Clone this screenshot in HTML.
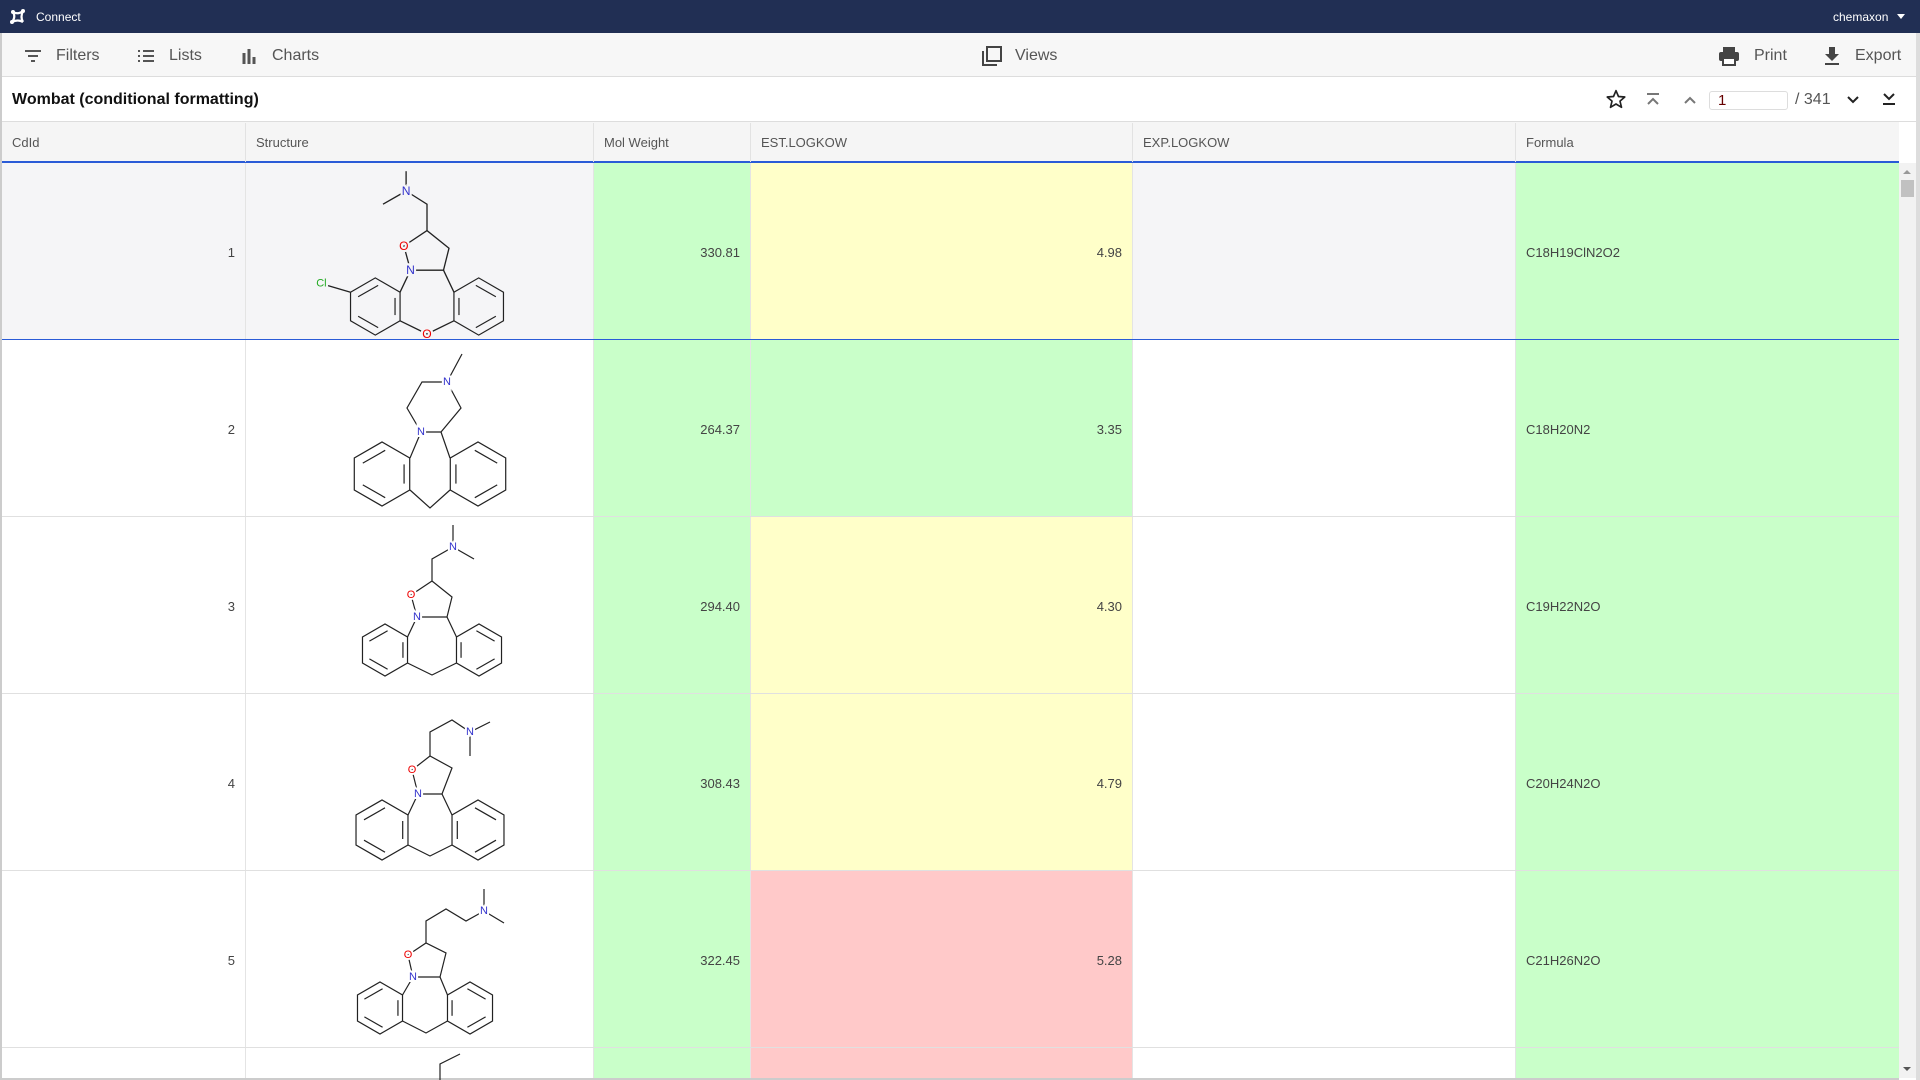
<!DOCTYPE html>
<html><head><meta charset="utf-8">
<style>
*{box-sizing:border-box;margin:0;padding:0}
body{width:1920px;height:1080px;overflow:hidden;background:#fff;font-family:"Liberation Sans",Arial,sans-serif;position:relative;color:#444}
.top{position:absolute;left:0;top:0;width:1920px;height:33px;background:#212f54;color:#fff;font-size:12px}
.tb{position:absolute;left:0;top:33px;width:1920px;height:44px;background:#f7f7f7;border-bottom:1px solid #ddd;font-size:16px;color:#555}
.tb .it{position:absolute;top:1px;height:44px;display:flex;align-items:center;gap:10px}
.title{position:absolute;left:0;top:77px;width:1920px;height:45px;border-bottom:1px solid #ddd;background:#fff}
.title b{position:absolute;left:12px;top:14px;font-size:16px;color:#111}
.hdr{position:absolute;left:2px;top:122px;width:1897px;height:41px;background:#f5f5f5;border-bottom:2px solid #2a5bd7;font-size:13px;color:#555}
.hdr div{position:absolute;top:1px;height:39px;line-height:39px;padding-left:10px;border-right:1px solid #e2e2e2}
.row{position:absolute;left:2px;width:1897px;border-bottom:1px solid #e0e0e0;font-size:13px;color:#444}
.c{position:absolute;top:0;bottom:0;border-right:1px solid #e4e4e4}
.n{display:flex;align-items:center;justify-content:flex-end;padding-right:10px;padding-top:2px}
.f{display:flex;align-items:center;padding-left:10px;padding-top:2px}
.g{background:#c9ffc9}.y{background:#ffffc9}.r{background:#ffc9c9}
svg.m{position:absolute;left:0;top:0}
.m line,.m polyline,.m polygon{stroke:#222;stroke-width:1.2;fill:none}
.m text{font-size:11px;text-anchor:middle;dominant-baseline:central;paint-order:stroke;stroke-width:4px}
</style></head><body>
<svg width="0" height="0" style="position:absolute">
 <symbol id="bz" overflow="visible">
  <g stroke="#222" fill="none" stroke-width="1.2">
  <polygon vector-effect="non-scaling-stroke" points="0.866,-0.5 0.866,0.5 0,1 -0.866,0.5 -0.866,-0.5 0,-1"/>
  <line vector-effect="non-scaling-stroke" x1="0.69" y1="-0.3" x2="0.69" y2="0.3"/>
  <line vector-effect="non-scaling-stroke" x1="0.1" y1="0.74" x2="-0.6" y2="0.34"/>
  <line vector-effect="non-scaling-stroke" x1="-0.6" y1="-0.34" x2="0.1" y2="-0.74"/>
  </g>
 </symbol>
</svg>

<div class="top">
 <svg style="position:absolute;left:9px;top:8px" width="18" height="18" viewBox="0 0 18 18"><path d="M4 4 Q9 7 14 3 M4 4 Q7 9 3 14 M14 3 Q11 9 14 14 M3 14 Q9 11 14 14" stroke="#fff" stroke-width="2.2" fill="none"/><circle cx="4" cy="4" r="2" fill="#fff"/><circle cx="14" cy="3" r="2" fill="#fff"/><circle cx="3" cy="14" r="2" fill="#fff"/></svg>
 <span style="position:absolute;left:36px;top:10px">Connect</span>
 <span style="position:absolute;left:1833px;top:10px">chemaxon</span>
 <span style="position:absolute;left:1897px;top:14px;border-left:4px solid transparent;border-right:4px solid transparent;border-top:5px solid #fff"></span>
</div>

<div class="tb">
 <div class="it" style="left:24px"><svg width="18" height="14"><path d="M1 2h16M4 7h10M7 12h4" stroke="#555" stroke-width="2"/></svg><span style="margin-left:4px">Filters</span></div>
 <div class="it" style="left:137px"><svg width="18" height="14"><path d="M1 2h2M6 2h11M1 7h2M6 7h11M1 12h2M6 12h11" stroke="#555" stroke-width="2"/></svg><span style="margin-left:4px">Lists</span></div>
 <div class="it" style="left:242px"><svg width="14" height="16"><path d="M2 5v11M7 1v15M12 9v7" stroke="#555" stroke-width="3"/></svg><span style="margin-left:6px">Charts</span></div>
 <div class="it" style="left:981px"><svg width="22" height="22"><path d="M2 6v14h14" stroke="#444" stroke-width="2" fill="none"/><rect x="6" y="2" width="14" height="14" stroke="#444" stroke-width="2" fill="none"/></svg><span style="margin-left:2px">Views</span></div>
 <div class="it" style="left:1718px"><svg width="22" height="20"><rect x="5" y="1" width="12" height="5" fill="#444"/><rect x="1" y="6" width="20" height="9" rx="2" fill="#444"/><rect x="5" y="12" width="12" height="7" fill="#fff" stroke="#444" stroke-width="2"/></svg><span style="margin-left:4px">Print</span></div>
 <div class="it" style="left:1823px"><svg width="18" height="20"><path d="M6 1h6v7h4l-7 7-7-7h4z" fill="#444"/><rect x="2" y="17" width="14" height="2" fill="#444"/></svg><span style="margin-left:4px">Export</span></div>
</div>

<div class="title"><b>Wombat (conditional formatting)</b>
 <svg style="position:absolute;left:1606px;top:12px" width="20" height="20" viewBox="0 0 24 24"><path d="M12 2l3 7 7.5.6-5.7 5 1.8 7.4L12 18l-6.6 4 1.8-7.4-5.7-5L9 9z" stroke="#222" stroke-width="2" fill="none" stroke-linejoin="round"/></svg>
 <svg style="position:absolute;left:1646px;top:16px" width="14" height="14"><path d="M1 1h12M2 11l5-5 5 5" stroke="#777" stroke-width="2" fill="none"/></svg>
 <svg style="position:absolute;left:1683px;top:18px" width="14" height="10"><path d="M2 8l5-5 5 5" stroke="#777" stroke-width="2" fill="none"/></svg>
 <div style="position:absolute;left:1709px;top:14px;width:79px;height:19px;border:1px solid #ddd;border-radius:3px;font-size:15px;color:#600;padding-left:8px;line-height:17px">1</div>
 <span style="position:absolute;left:1795px;top:14px;font-size:16px;color:#555">/ 341</span>
 <svg style="position:absolute;left:1846px;top:18px" width="14" height="10"><path d="M2 2l5 5 5-5" stroke="#222" stroke-width="2" fill="none"/></svg>
 <svg style="position:absolute;left:1882px;top:15px" width="14" height="14"><path d="M2 2l5 5 5-5M1 12h12" stroke="#222" stroke-width="2" fill="none"/></svg>
</div>

<div class="hdr">
 <div style="left:0;width:244px">CdId</div>
 <div style="left:244px;width:348px">Structure</div>
 <div style="left:592px;width:157px">Mol Weight</div>
 <div style="left:749px;width:382px">EST.LOGKOW</div>
 <div style="left:1131px;width:383px">EXP.LOGKOW</div>
 <div style="left:1514px;width:383px;border-right:none">Formula</div>
</div>

<div class="row" style="top:163px;height:177px;background:#f5f5f7;border-bottom:1px solid #2a5bd7">
 <div class="c n" style="left:0;width:244px">1</div>
 <div class="c" style="left:244px;width:348px">
  <svg class="m" width="348" height="176"><g transform="translate(181,94) scale(1.1) translate(-174,-88)">
   <use href="#bz" transform="translate(127,133) scale(26)"/>
   <use href="#bz" transform="translate(221,133) scale(-26,26)"/>
   <line x1="149.5" y1="120" x2="159" y2="100"/><line x1="198.5" y1="120" x2="189" y2="100"/>
   <polyline points="149.5,146 174,158 198.5,146"/>
   <polyline points="159,100 153,78 174,64 194,80 189,100 159,100"/>
   <polyline points="174,64 174,40 155,28"/><line x1="155" y1="28" x2="155" y2="10"/><line x1="155" y1="28" x2="134" y2="40"/>
   <line x1="104.5" y1="120" x2="84" y2="114"/>
   <text x="174" y="158" fill="#e00" stroke="#f5f5f7">O</text>
   <text x="153" y="78" fill="#e00" stroke="#f5f5f7">O</text>
   <text x="159" y="100" fill="#33c" stroke="#f5f5f7">N</text>
   <text x="155" y="28" fill="#33c" stroke="#f5f5f7">N</text>
   <text x="78" y="112" fill="#2a2" stroke="#f5f5f7" style="font-size:10px">Cl</text>
  </g></svg>
 </div>
 <div class="c n g" style="left:592px;width:157px">330.81</div>
 <div class="c n y" style="left:749px;width:382px">4.98</div>
 <div class="c" style="left:1131px;width:383px"></div>
 <div class="c f g" style="left:1514px;width:383px;border-right:none">C18H19ClN2O2</div>
</div>

<div class="row" style="top:340px;height:177px">
 <div class="c n" style="left:0;width:244px">2</div>
 <div class="c" style="left:244px;width:348px">
  <svg class="m" width="348" height="176"><g transform="translate(10,0)">
   <use href="#bz" transform="translate(126,134) scale(32)"/>
   <use href="#bz" transform="translate(222,134) scale(-32,32)"/>
   <line x1="154" y1="118" x2="165" y2="92"/><line x1="194" y1="118" x2="185" y2="92"/>
   <polyline points="154,150 174,168 194,150"/>
   <polyline points="165,92 151,68 166,42 191,42 205,68 185,92 165,92"/>
   <line x1="191" y1="42" x2="206" y2="14"/>
   <text x="165" y="92" fill="#33c" stroke="#fff">N</text>
   <text x="191" y="42" fill="#33c" stroke="#fff">N</text>
  </g></svg>
 </div>
 <div class="c n g" style="left:592px;width:157px">264.37</div>
 <div class="c n g" style="left:749px;width:382px">3.35</div>
 <div class="c" style="left:1131px;width:383px"></div>
 <div class="c f g" style="left:1514px;width:383px;border-right:none">C18H20N2</div>
</div>

<div class="row" style="top:517px;height:177px">
 <div class="c n" style="left:0;width:244px">3</div>
 <div class="c" style="left:244px;width:348px">
  <svg class="m" width="348" height="176"><g transform="translate(12,0)">
   <use href="#bz" transform="translate(127,133) scale(26)"/>
   <use href="#bz" transform="translate(221,133) scale(-26,26)"/>
   <line x1="149.5" y1="120" x2="159" y2="100"/><line x1="198.5" y1="120" x2="189" y2="100"/>
   <polyline points="149.5,146 174,158 198.5,146"/>
   <polyline points="159,100 153,78 174,64 194,80 189,100 159,100"/>
   <polyline points="174,64 174,42 195,30"/><line x1="195" y1="30" x2="195" y2="8"/><line x1="195" y1="30" x2="216" y2="42"/>
   <text x="153" y="78" fill="#e00" stroke="#fff">O</text>
   <text x="159" y="100" fill="#33c" stroke="#fff">N</text>
   <text x="195" y="30" fill="#33c" stroke="#fff">N</text>
  </g></svg>
 </div>
 <div class="c n g" style="left:592px;width:157px">294.40</div>
 <div class="c n y" style="left:749px;width:382px">4.30</div>
 <div class="c" style="left:1131px;width:383px"></div>
 <div class="c f g" style="left:1514px;width:383px;border-right:none">C19H22N2O</div>
</div>

<div class="row" style="top:694px;height:177px">
 <div class="c n" style="left:0;width:244px">4</div>
 <div class="c" style="left:244px;width:348px">
  <svg class="m" width="348" height="176"><g transform="translate(10,0)">
   <use href="#bz" transform="translate(126,136) scale(30)"/>
   <use href="#bz" transform="translate(222,136) scale(-30,30)"/>
   <line x1="152" y1="121" x2="162" y2="100"/><line x1="196" y1="121" x2="186" y2="100"/>
   <polyline points="152,151 174,162 196,151"/>
   <polyline points="162,100 156,76 174,62 196,74 186,100 162,100"/>
   <polyline points="174,62 174,38 196,26 214,38 234,28"/><line x1="214" y1="38" x2="214" y2="62"/>
   <text x="156" y="76" fill="#e00" stroke="#fff">O</text>
   <text x="162" y="100" fill="#33c" stroke="#fff">N</text>
   <text x="214" y="38" fill="#33c" stroke="#fff">N</text>
  </g></svg>
 </div>
 <div class="c n g" style="left:592px;width:157px">308.43</div>
 <div class="c n y" style="left:749px;width:382px">4.79</div>
 <div class="c" style="left:1131px;width:383px"></div>
 <div class="c f g" style="left:1514px;width:383px;border-right:none">C20H24N2O</div>
</div>

<div class="row" style="top:871px;height:177px">
 <div class="c n" style="left:0;width:244px">5</div>
 <div class="c" style="left:244px;width:348px">
  <svg class="m" width="348" height="176"><g transform="translate(12,0)">
   <use href="#bz" transform="translate(122,137) scale(26)"/>
   <use href="#bz" transform="translate(212,137) scale(-26,26)"/>
   <line x1="144.5" y1="124" x2="155" y2="106"/><line x1="189.5" y1="124" x2="182" y2="106"/>
   <polyline points="144.5,150 168,162 189.5,150"/>
   <polyline points="155,106 150,84 168,72 188,82 182,106 155,106"/>
   <polyline points="168,72 168,50 188,38 208,50 226,40"/><line x1="226" y1="40" x2="226" y2="18"/><line x1="226" y1="40" x2="246" y2="52"/>
   <text x="150" y="84" fill="#e00" stroke="#fff">O</text>
   <text x="155" y="106" fill="#33c" stroke="#fff">N</text>
   <text x="226" y="40" fill="#33c" stroke="#fff">N</text>
  </g></svg>
 </div>
 <div class="c n g" style="left:592px;width:157px">322.45</div>
 <div class="c n r" style="left:749px;width:382px">5.28</div>
 <div class="c" style="left:1131px;width:383px"></div>
 <div class="c f g" style="left:1514px;width:383px;border-right:none">C21H26N2O</div>
</div>

<div class="row" style="top:1048px;height:32px;border-bottom:2px solid #ccc">
 <div class="c" style="left:0;width:244px"></div>
 <div class="c" style="left:244px;width:348px"><svg class="m" width="348" height="32"><polyline points="194,32 194,16 214,6"/></svg></div>
 <div class="c g" style="left:592px;width:157px"></div>
 <div class="c r" style="left:749px;width:382px"></div>
 <div class="c" style="left:1131px;width:383px"></div>
 <div class="c g" style="left:1514px;width:383px;border-right:none"></div>
</div>

<div style="position:absolute;left:1899px;top:163px;width:17px;height:915px;background:#f2f2f2"></div>
<div style="position:absolute;left:1903px;top:170px;border-left:4px solid transparent;border-right:4px solid transparent;border-bottom:4px solid #999"></div>
<div style="position:absolute;left:1901px;top:180px;width:13px;height:17px;background:#c1c1c1"></div>
<div style="position:absolute;left:1903px;top:1067px;border-left:4px solid transparent;border-right:4px solid transparent;border-top:4px solid #555"></div>
<div style="position:absolute;left:0;top:33px;width:2px;height:1047px;background:#ccc"></div>
<div style="position:absolute;left:1916px;top:33px;width:4px;height:1047px;background:#ddd"></div>
</body></html>
